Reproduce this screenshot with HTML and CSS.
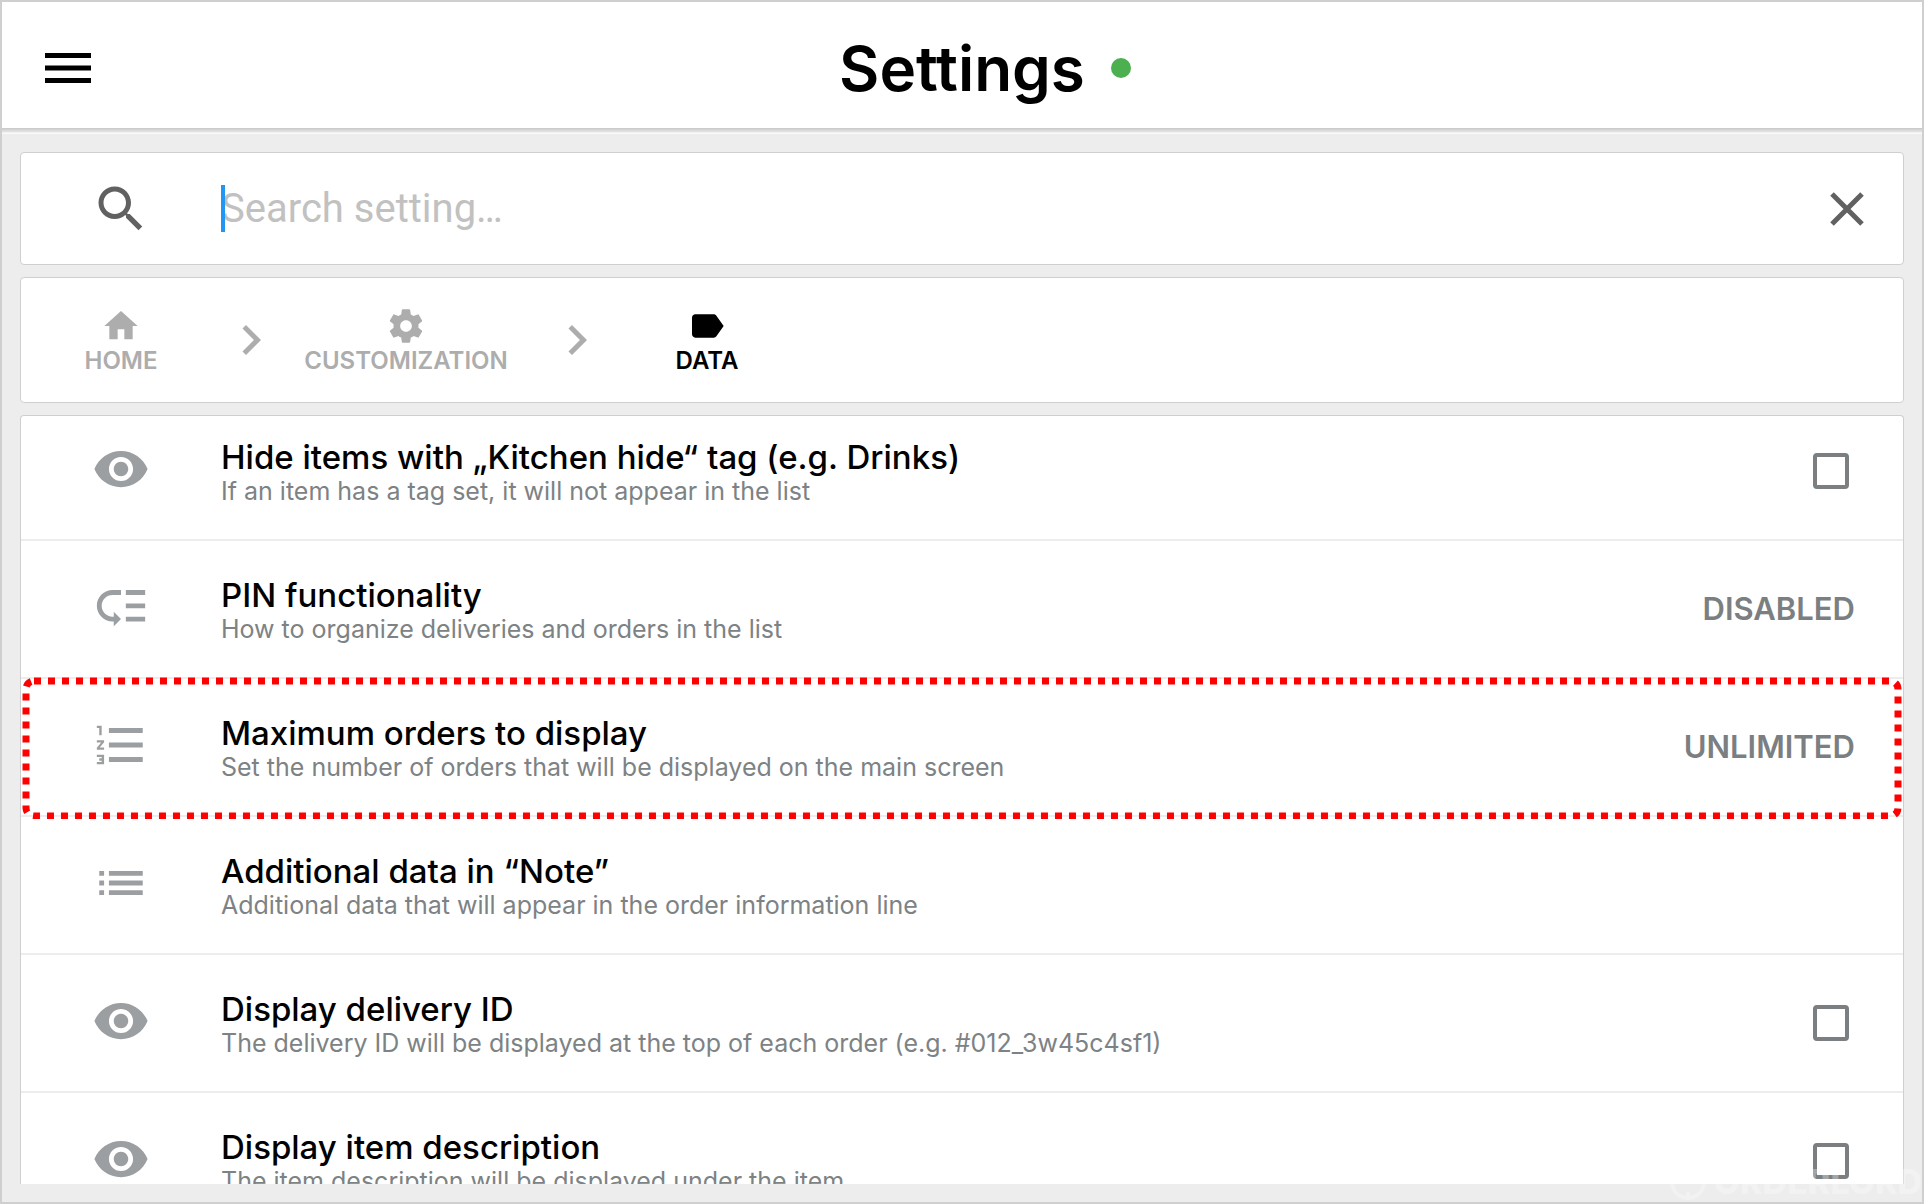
FILE: index.html
```html
<!DOCTYPE html>
<html lang="en">
<head>
<meta charset="utf-8">
<meta name="viewport" content="width=device-width, initial-scale=1">
<title>Settings</title>
<link rel="stylesheet" href="styles.css">
</head>
<body>
<svg class="defs" aria-hidden="true">
  <symbol id="eye" viewBox="0 0 24 24"><path d="M12 4.500C7 4.500 2.730 7.610 1 12c1.730 4.390 6 7.500 11 7.500s9.270-3.110 11-7.500c-1.730-4.390-6-7.500-11-7.500zM12 17c-2.760 0-5-2.240-5-5s2.240-5 5-5 5 2.240 5 5-2.240 5-5 5zm0-8c-1.660 0-3 1.340-3 3s1.340 3 3 3 3-1.340 3-3-1.340-3-3-3z"/></symbol>
  <symbol id="chevron" viewBox="0 0 24 24"><path d="M10 6L8.590 7.410 13.170 12l-4.580 4.590L10 18l6-6z"/></symbol>
</svg>
<div class="app">
  <header class="topbar">
    <button class="icon-button menu" type="button" aria-label="Menu">
      <svg viewBox="0 0 46 30"><path d="M0 0h46v5H0zM0 12.500h46v5H0zM0 25h46v5H0z"/></svg>
    </button>
    <h1 class="title">Settings</h1>
    <span class="status"></span>
  </header>

  <main class="content">
    <form class="card search" role="search">
      <span class="lead">
        <svg class="icon search-icon" viewBox="0 0 24 24"><path d="M15.500 14h-.79l-.28-.27C15.410 12.590 16 11.110 16 9.500 16 5.910 13.090 3 9.500 3S3 5.910 3 9.500 5.910 16 9.500 16c1.610 0 3.090-.59 4.230-1.570l.27.28v.79l5 4.990L20.490 19l-4.990-5zm-6 0C7.010 14 5 11.990 5 9.500S7.010 5 9.500 5 14 7.010 14 9.500 11.990 14 9.500 14z"/></svg>
      </span>
      <div class="field">
        <input class="search-input" type="text" placeholder="Search setting…" aria-label="Search setting">
        <span class="caret"></span>
      </div>
      <button class="icon-button close" type="button" aria-label="Clear">
        <svg viewBox="0 0 34 34"><path d="M2 2l30 30M32 2L2 32"/></svg>
      </button>
    </form>

    <nav class="card crumbs" aria-label="Breadcrumb">
      <a class="crumb" href="#home">
        <svg class="crumb-icon" viewBox="0 0 24 24"><path d="M10 20v-6h4v6h5v-8h3L12 3 2 12h3v8z"/></svg>
        HOME
      </a>
      <svg class="separator"><use href="#chevron"/></svg>
      <a class="crumb wide" href="#customization">
        <svg class="crumb-icon" viewBox="0 0 24 24"><path d="M19.430 12.980c.04-.32.07-.64.07-.98s-.03-.66-.07-.98l2.110-1.650c.19-.15.24-.42.12-.64l-2-3.460c-.12-.22-.39-.3-.61-.22l-2.490 1c-.52-.4-1.080-.73-1.690-.98l-.38-2.650C14.460 2.180 14.250 2 14 2h-4c-.25 0-.46.18-.49.42l-.38 2.650c-.61.25-1.170.59-1.690.98l-2.490-1c-.23-.09-.49 0-.61.22l-2 3.460c-.13.22-.07.49.12.64l2.110 1.650c-.04.32-.07.65-.07.98s.03.66.07.98l-2.110 1.650c-.19.15-.24.42-.12.64l2 3.460c.12.22.39.3.61.22l2.490-1c.52.4 1.080.73 1.690.98l.38 2.650c.03.24.24.42.49.42h4c.25 0 .46-.18.49-.42l.38-2.650c.61-.25 1.170-.59 1.690-.98l2.490 1c.23.09.49 0 .61-.22l2-3.460c.12-.22.07-.49-.12-.64l-2.110-1.650zM12 15.500c-1.930 0-3.500-1.570-3.500-3.500s1.570-3.500 3.500-3.500 3.500 1.570 3.500 3.500-1.570 3.500-3.500 3.500z"/></svg>
        CUSTOMIZATION
      </a>
      <svg class="separator"><use href="#chevron"/></svg>
      <a class="crumb current" href="#data" aria-current="page">
        <svg class="crumb-icon" viewBox="0 0 24 24"><path d="M17.630 5.840C17.270 5.330 16.670 5 16 5L5 5.010C3.900 5.010 3 5.900 3 7v10c0 1.100.9 1.990 2 1.990L16 19c.67 0 1.270-.33 1.630-.84L22 12l-4.370-6.160z"/></svg>
        DATA
      </a>
    </nav>

    <section class="card list-card">
      <ul class="list">
        <li class="row">
          <span class="lead"><svg class="icon"><use href="#eye"/></svg></span>
          <label class="text" for="hide-items"><span class="name">Hide items with „Kitchen hide“ tag (e.g. Drinks)</span><span class="hint">If an item has a tag set, it will not appear in the list</span></label>
          <input class="check" type="checkbox" id="hide-items">
        </li>
        <li class="row">
          <span class="lead"><svg class="icon" viewBox="0 0 24 24"><path d="M14 5h8v2h-8zm0 5.500h8v2h-8zm0 5.500h8v2h-8zM2 11.500C2 15.080 4.920 18 8.500 18H9v2l3-3-3-3v2h-.5C6.020 16 4 13.980 4 11.500S6.020 7 8.500 7H12V5H8.500C4.920 5 2 7.920 2 11.500z"/></svg></span>
          <div class="text"><span class="name">PIN functionality</span><span class="hint">How to organize deliveries and orders in the list</span></div>
          <button class="value" type="button">DISABLED</button>
        </li>
        <li class="row highlighted">
          <span class="lead"><svg class="icon" viewBox="0 0 24 24"><path d="M2 17h2v.5H3v1h1v.5H2v1h3v-4H2v1zm1-9h1V4H2v1h1v3zm-1 3h1.800L2 13.100v.9h3v-1H3.200L5 10.900V10H2v1zm5-6v2h14V5H7zm0 14h14v-2H7v2zm0-6h14v-2H7v2z"/></svg></span>
          <div class="text"><span class="name">Maximum orders to display</span><span class="hint">Set the number of orders that will be displayed on the main screen</span></div>
          <button class="value" type="button">UNLIMITED</button>
          <svg class="marker" aria-hidden="true"><rect class="marker-line" rx="8"/></svg>
        </li>
        <li class="row">
          <span class="lead"><svg class="icon" viewBox="0 0 24 24"><path d="M3 13h2v-2H3v2zm0 4h2v-2H3v2zm0-8h2V7H3v2zm4 4h14v-2H7v2zm0 4h14v-2H7v2zM7 7v2h14V7H7z"/></svg></span>
          <div class="text"><span class="name">Additional data in “Note”</span><span class="hint">Additional data that will appear in the order information line</span></div>
        </li>
        <li class="row">
          <span class="lead"><svg class="icon"><use href="#eye"/></svg></span>
          <label class="text" for="delivery-id"><span class="name">Display delivery ID</span><span class="hint">The delivery ID will be displayed at the top of each order (e.g. #012_3w45c4sf1)</span></label>
          <input class="check" type="checkbox" id="delivery-id">
        </li>
        <li class="row">
          <span class="lead"><svg class="icon"><use href="#eye"/></svg></span>
          <label class="text" for="item-description"><span class="name">Display item description</span><span class="hint">The item description will be displayed under the item</span></label>
          <input class="check" type="checkbox" id="item-description">
        </li>
      </ul>
    </section>
  </main>

  <div class="watermark">
    <svg class="watermark-logo" viewBox="0 0 40 40"><circle cx="20" cy="20" r="16"/><path d="M20 36v-6"/></svg>
    ORDERLORD
  </div>
</div>
</body>
</html>
```
FILE: styles.css
```css
* { box-sizing: border-box; }

body {
  margin: 0;
  font-family: Inter, "Open Sans", sans-serif;
  color: #000;
}

.defs { display: none; }

.app {
  position: relative;
  display: flex;
  flex-direction: column;
  height: 100vh;
  overflow: hidden;
  border: 2px solid #cfcfcf;
  background: #ededed;
}

.topbar {
  display: grid;
  grid-template-columns: 1fr auto 1fr;
  align-items: center;
  height: 126px;
  padding: 0 43px;
  background: #fff;
}

.icon-button {
  display: flex;
  padding: 0;
  border: 0;
  background: none;
}

.menu svg { width: 46px; height: 30px; margin-top: 6px; }

.title {
  margin: 0;
  padding-top: 8px;
  font-size: 62px;
  line-height: 72px;
  font-weight: 600;
}

.status {
  width: 20px;
  height: 20px;
  margin: 6px 0 0 26px;
  border-radius: 50%;
  background: #4caf50;
}

.content {
  display: flex;
  flex: 1;
  flex-direction: column;
  gap: 12px;
  min-height: 0;
  padding: 24px 18px 18px;
  background: linear-gradient(#c8c8c8, #e6e6e6 4px, #fafafa 5px, #fafafa 6px, #ededed 6px);
}

.card {
  border: 1px solid #cfcfcf;
  border-radius: 4px;
  background: #fff;
}

.lead {
  display: flex;
  flex: none;
  justify-content: center;
  width: 200px;
}

.icon { width: 58px; height: 58px; fill: #9c9fa2; }

.search {
  display: flex;
  align-items: center;
  height: 113px;
  padding-right: 39px;
}

.search-icon { width: 60px; height: 60px; fill: #616161; }

.field { position: relative; flex: 1; }

.search-input {
  width: 100%;
  height: 60px;
  padding: 0;
  border: 0;
  outline: 0;
  font: 40px/60px Roboto, sans-serif;
}

.search-input::placeholder { color: #c1c1c1; opacity: 1; }

.caret {
  position: absolute;
  top: 6px;
  left: 0;
  width: 4px;
  height: 47px;
  background: #2196f3;
}

.close svg {
  width: 34px;
  height: 34px;
  fill: none;
  stroke: #616161;
  stroke-width: 5;
}

.crumbs {
  display: flex;
  align-items: center;
  height: 126px;
}

.crumb {
  display: flex;
  flex-direction: column;
  align-items: center;
  width: 200px;
  padding-top: 2px;
  color: #adadad;
  font-size: 24px;
  line-height: 30px;
  font-weight: 600;
  text-decoration: none;
}

.crumb.wide { width: 250px; margin-right: 16px; }
.crumb.current { color: #000; }
.crumb-icon { width: 40px; height: 40px; fill: currentColor; }
.separator { width: 60px; height: 60px; fill: #adadad; }

.list-card {
  flex: 1;
  min-height: 0;
  overflow: hidden;
  border-bottom: 0;
  border-radius: 4px 4px 0 0;
}

/* the list is scrolled slightly past its top edge */
.list {
  margin: -13px 0 0;
  padding: 0;
  list-style: none;
}

.row {
  position: relative;
  display: flex;
  align-items: center;
  height: 138px;
  padding-right: 48px;
  border-bottom: 2px solid #ededed;
}

.row .lead { padding-bottom: 4px; }

.text { flex: 1; padding-top: 4px; }
.name, .hint { display: block; }
.name { font-size: 33px; line-height: 36px; font-weight: 500; }
.hint { font-size: 25px; line-height: 32px; color: #7d8284; }

.value {
  padding: 0;
  border: 0;
  background: none;
  color: #7b7f82;
  font: 600 31px/36px Inter, sans-serif;
}

.check {
  appearance: none;
  width: 36px;
  height: 36px;
  margin: 0 6px 0 0;
  border: 4px solid #7b7f82;
  border-radius: 4px;
}

.marker {
  position: absolute;
  top: -2px;
  left: 1px;
  width: calc(100% - 2px);
  height: 142px;
}

.marker-line {
  x: 4px;
  y: 4px;
  width: calc(100% - 8px);
  height: 135px;
  fill: none;
  stroke: #f00;
  stroke-width: 7;
  stroke-dasharray: 7 7;
}

.watermark {
  position: absolute;
  right: 0;
  bottom: 0;
  display: flex;
  align-items: center;
  gap: 6px;
  color: #fff;
  font-size: 34px;
  line-height: 40px;
  font-weight: 800;
  opacity: 0.3;
}

.watermark-logo {
  width: 40px;
  height: 40px;
  fill: none;
  stroke: #fff;
  stroke-width: 4;
}
```
